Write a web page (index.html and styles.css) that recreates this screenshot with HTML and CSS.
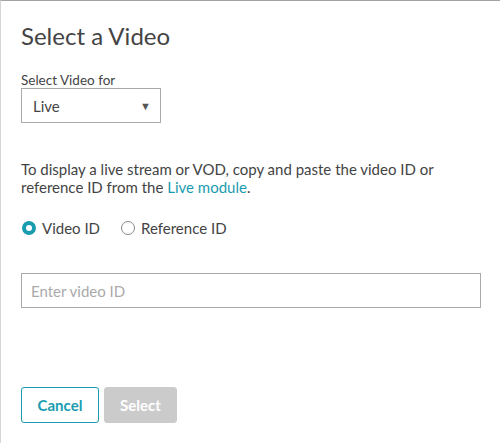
FILE: index.html
```html
<!DOCTYPE html>
<html>
<head>
<meta charset="utf-8">
<link rel="stylesheet" href="styles.css">
</head>
<body>
<div class="dialog">
  <h1 class="title">Select a Video</h1>
  <div class="field-label">Select Video for</div>
  <div class="select">
    <span>Live</span>
    <span class="arrow">&#9660;</span>
  </div>
  <p class="desc">To display a live stream or VOD, copy and paste the video ID or reference ID from the <a class="link">Live module</a>.</p>
  <div class="radios">
    <label class="radio"><span class="dot checked"></span>Video ID</label>
    <label class="radio"><span class="dot"></span>Reference ID</label>
  </div>
  <div class="input">Enter video ID</div>
  <div class="buttons">
    <button class="btn cancel">Cancel</button>
    <button class="btn select-btn">Select</button>
  </div>
</div>
</body>
</html>
```
FILE: styles.css
```css
html, body {
  margin: 0;
  padding: 0;
  background: #fff;
}
body {
  font-family: Lato, "Open Sans", sans-serif;
  color: #444;
  width: 500px;
  height: 443px;
  overflow: hidden;
}
.dialog {
  box-sizing: border-box;
  width: 500px;
  height: 443px;
  border-top: 1px solid #a3a3a3;
  border-left: 1px solid #d6d6d6;
  padding: 0 0 0 20px;
}
.title {
  margin: 20px 0 0 0;
  font-size: 24px;
  font-weight: 400;
  line-height: 30px;
  color: #444;
}
.field-label {
  margin-top: 21px;
  font-size: 13.5px;
  line-height: 16px;
}
.select {
  box-sizing: border-box;
  width: 140px;
  height: 35px;
  border: 1px solid #aaa;
  display: flex;
  align-items: center;
  justify-content: space-between;
  padding: 0 9px 0 11px;
  font-size: 15px;
}
.arrow {
  font-size: 11px;
  color: #555;
}
.desc {
  margin: 37px 0 0 0;
  width: 459px;
  font-size: 15px;
  line-height: 18px;
}
.link {
  color: #1a9cb0;
}
.radios {
  display: flex;
  gap: 20px;
  margin-top: 23px;
  font-size: 15px;
}
.radio {
  display: flex;
  align-items: center;
  gap: 6px;
  line-height: 18px;
}
.dot {
  box-sizing: border-box;
  width: 14px;
  height: 14px;
  border-radius: 50%;
  border: 1px solid #888;
  margin-left: 1px;
}
.dot.checked {
  border: 4px solid #1a9cb0;
  background: #fff;
}
.input {
  box-sizing: border-box;
  margin-top: 36px;
  width: 460px;
  height: 35px;
  border: 1px solid #aaa;
  padding: 0 9px;
  display: flex;
  align-items: center;
  font-size: 15px;
  color: #aaa;
}
.buttons {
  display: flex;
  gap: 5px;
  margin-top: 79px;
}
.btn {
  font-family: Lato, "Open Sans", sans-serif;
  font-weight: 700;
  font-size: 15px;
  height: 36px;
  border-radius: 3px;
  padding: 0;
}
.cancel {
  width: 78px;
  background: #fff;
  border: 1px solid #1a9cb0;
  color: #1a9cb0;
}
.select-btn {
  width: 73px;
  background: #cbcbcb;
  border: 1px solid #cbcbcb;
  color: #fff;
}
```
